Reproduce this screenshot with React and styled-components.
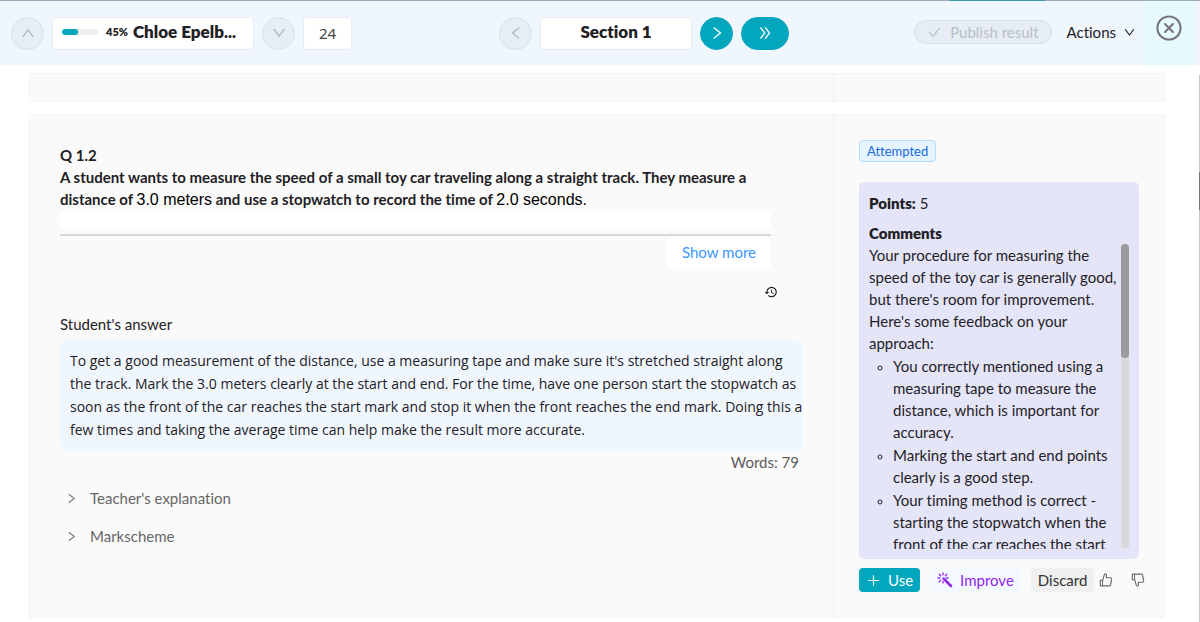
import React from 'react'
import styled, { createGlobalStyle } from 'styled-components'
import {
  AiOutlineUp,
  AiOutlineDown,
  AiOutlineLeft,
  AiOutlineRight,
  AiOutlineDoubleRight,
  AiOutlineCheck,
  AiOutlinePlus,
  AiOutlineLike,
  AiOutlineDislike
} from 'react-icons/ai'
import { MdHistory } from 'react-icons/md'

const GlobalStyle = createGlobalStyle`
  * {
    box-sizing: border-box;
  }

  body {
    margin: 0;
    background: #fff;
    color: #1f2124;
    font-family: Lato, "Open Sans", sans-serif;
    font-size: 15px;
    font-variant-ligatures: none;
    line-height: 22px;
  }

  button, input {
    font: inherit;
    color: inherit;
  }

  p, h2, h3, ul {
    margin: 0;
    padding: 0;
    font-size: inherit;
  }
`

const Page = styled.div`
  height: 100vh;
  overflow: hidden;
  display: flex;
  flex-direction: column;
`

const TopBar = styled.header`
  display: grid;
  grid-template-columns: 17fr auto 14fr;
  align-items: center;
  height: 65px;
  flex: none;
  border-top: 1px solid;
  border-image: linear-gradient(to right, #a4a9b6 79%, #4595ab 79%, #4595ab 87%, #a4a9b6 87%) 1;
  background: #eff6fe;
`

const Group = styled.div`
  display: flex;
  align-items: center;
  gap: 8px;
`

const StartGroup = styled(Group)`
  padding-left: 11px;
`

const EndGroup = styled(Group)`
  justify-content: flex-end;
  align-self: stretch;
  gap: 0;
`

const RoundButton = styled.button`
  display: flex;
  align-items: center;
  justify-content: center;
  width: ${props => props.$wide ? '48px' : '33px'};
  height: 33px;
  padding: 0;
  border-radius: 17px;
  border: 1px solid ${props => props.$primary ? '#02a7be' : '#dbe1e8'};
  background: ${props => props.$primary ? '#02a7be' : '#e6edf5'};
  color: ${props => props.$primary ? '#fff' : '#b0b6bd'};
  font-size: 16px;
`

const Picker = styled.button`
  display: flex;
  align-items: center;
  justify-content: ${props => props.$center ? 'center' : 'flex-start'};
  width: ${props => props.$center ? '152px' : '202px'};
  height: 33px;
  padding: 0 9px 2px;
  border: 1px solid #e9edf1;
  border-radius: 5px;
  background: #fff;
  font-size: 17px;
  font-weight: 800;
  white-space: nowrap;
`

const Track = styled.span`
  width: 36px;
  height: 6px;
  margin-right: 8px;
  border-radius: 3px;
  background: #efefef;
`

const Fill = styled.span`
  display: block;
  height: 6px;
  border-radius: 3px;
  background: #02a7be;
`

const Percent = styled.span`
  margin-right: 5px;
  font-size: 11px;
`

const CountInput = styled.input`
  width: 49px;
  height: 33px;
  padding: 0;
  border: 1px solid #e9edf1;
  border-radius: 4px;
  background: #fff;
  font-family: "Noto Sans", sans-serif;
  font-size: 15px;
  text-align: center;
  color: #444;
`

const PublishButton = styled.button`
  display: flex;
  align-items: center;
  gap: 8px;
  height: 24px;
  margin-bottom: 2px;
  padding: 0 12px;
  border: 1px solid #dbe1e8;
  border-radius: 12px;
  background: #e6edf5;
  color: #b9bfc6;
`

const ActionsButton = styled.button`
  display: flex;
  align-items: center;
  gap: 7px;
  margin: 0 8px 2px 15px;
  padding: 0;
  border: 0;
  background: none;

  svg {
    font-size: 13px;
  }
`

const CloseButton = styled.button`
  display: flex;
  align-items: center;
  justify-content: center;
  align-self: stretch;
  width: 50px;
  margin-right: 6px;
  padding: 0 0 11px;
  border: 0;
  background: #e6fafe;
`

const Body = styled.div`
  flex: 1;
  min-height: 0;
  display: flex;
`

const Content = styled.main`
  flex: 1;
  min-width: 0;
  display: flex;
  flex-direction: column;
  gap: 12px;
  padding: 8px 34px 4px 29px;
`

const PageScrollbar = styled.div`
  width: 1px;
  margin-top: 10px;
  padding-top: 97px;
  background: #c9c9c9;
`

const PageThumb = styled.div`
  height: 38px;
  background: #777;
`

const Row = styled.section`
  display: grid;
  grid-template-columns: minmax(0, 1fr) 330px;
  flex: ${props => props.$fill ? '1' : '0 0 29px'};
  min-height: 0;
  border: 1px solid #f4f4f5;
  background: #fafafa;
`

const Question = styled.div`
  padding: 29px 30px 0;
  border-right: 1px solid #f1f1f2;
`

const Stem = styled.div`
  margin-right: 32px;
  font-weight: 700;
  border-bottom: 2px solid #d9d9d9;

  &::after {
    content: '';
    display: block;
    height: 16px;
    margin: 1px 0 6px;
    background: #fff;
  }
`

const Measure = styled.span`
  font-family: "Liberation Sans", Arial, sans-serif;
  font-size: 16px;
  font-weight: 400;
  color: #000;
`

const ShowMore = styled.button`
  display: block;
  height: 32px;
  margin: 1px 32px 0 auto;
  padding: 0 15px 2px;
  border: 0;
  border-radius: 4px;
  background: #fff;
  color: #3a97ff;
`

const HistoryButton = styled.button`
  display: block;
  height: 14px;
  margin: 16px 25px 0 auto;
  padding: 0;
  border: 0;
  background: none;
  font-size: 14px;
  line-height: 14px;
`

const Label = styled.h3`
  margin-top: 14px;
  font-weight: 400;
`

const Answer = styled.p`
  margin-top: 5px;
  padding: 9px 0 10px 10px;
  border-radius: 8px;
  background: #eff6fe;
  font-family: "Open Sans", sans-serif;
  font-size: 14px;
  line-height: 23px;
  white-space: nowrap;
`

const WordCount = styled.p`
  padding: 0 4px;
  text-align: right;
  color: #5d5d5d;
`

const Folds = styled.div`
  display: flex;
  flex-direction: column;
  align-items: flex-start;
  gap: 16px;
  margin-top: 14px;
`

const Fold = styled.button`
  display: flex;
  align-items: center;
  gap: 12px;
  padding: 0 5px;
  border: 0;
  background: none;
  color: #666;

  svg {
    font-size: 13px;
  }
`

const Review = styled.aside`
  display: flex;
  flex-direction: column;
  align-items: flex-start;
  padding: 25px;
`

const Tag = styled.span`
  height: 22px;
  padding: 0 7px;
  border: 1px solid #b5dcff;
  border-radius: 4px;
  background: #e6f4ff;
  color: #1769e0;
  font-size: 13px;
  line-height: 20px;
`

const Feedback = styled.div`
  align-self: stretch;
  margin-top: 20px;
  padding: 10px;
  border-radius: 5px;
  background: #e5e5fa;

  b {
    font-weight: 800;
  }
`

const CommentsTitle = styled.h3`
  margin-top: 8px;
  font-weight: 800;
`

const CommentsBox = styled.div`
  display: flex;
  justify-content: space-between;
  height: 305px;
  overflow: hidden;
`

const Comments = styled.div`
  white-space: nowrap;

  ul {
    margin-top: 1px;
    padding-left: 24px;
    list-style: circle;
  }

  li {
    margin-bottom: 1px;
  }

  li::marker {
    font-size: 12px;
  }
`

const ScrollTrack = styled.div`
  width: 8px;
  border-radius: 4px;
  background: #d9d9dc;
`

const ScrollThumb = styled.div`
  height: 114px;
  border-radius: 4px;
  background: #9b9b9b;
`

const Buttons = styled.div`
  display: flex;
  align-items: center;
  gap: 10px;
  margin-top: 9px;
`

const SmallButton = styled.button`
  display: flex;
  align-items: center;
  gap: 7px;
  height: 24px;
  padding: 0 7px;
  border: 0;
  border-radius: 4px;
  background: ${props => props.$bg};
  color: ${props => props.$color};
`

const Votes = styled.div`
  display: flex;
  gap: 16px;
  margin-left: -6px;
`

const IconButton = styled.button`
  display: flex;
  padding: 0;
  border: 0;
  background: none;
  color: #6b6b6b;
  font-size: 16px;
`

const CloseIcon = () => (
  <svg width="26" height="26" viewBox="0 0 26 26" fill="none" stroke="#75727a" strokeWidth="2">
    <circle cx="13" cy="13" r="11.6"/>
    <path d="M9 9l8 8M17 9l-8 8" strokeLinecap="round"/>
  </svg>
)

const WandIcon = () => (
  <svg width="16" height="16" viewBox="0 0 16 16" fill="none" stroke="#9024ee" strokeWidth="1.3" strokeLinecap="round">
    <path d="M6.6 6.6l7.4 7.4" strokeWidth="2.6"/>
    <path d="M6 1v1.8M1 6h1.8M2.2 2.2l1.5 1.5M9.8 2.2L8.3 3.7M2.2 9.8l1.5-1.5M6 9.3V11M9.3 6H11"/>
  </svg>
)

const TopNav = () => (
  <TopBar>
    <StartGroup>
      <RoundButton disabled aria-label="Previous student"><AiOutlineUp/></RoundButton>
      <Picker>
        <Track><Fill style={{ width: '45%' }}/></Track>
        <Percent>45%</Percent>
        Chloe Epelb...
      </Picker>
      <RoundButton disabled aria-label="Next student"><AiOutlineDown/></RoundButton>
      <CountInput aria-label="Total points" defaultValue="24"/>
    </StartGroup>
    <Group>
      <RoundButton disabled aria-label="Previous section"><AiOutlineLeft/></RoundButton>
      <Picker $center>Section 1</Picker>
      <RoundButton $primary aria-label="Next section"><AiOutlineRight/></RoundButton>
      <RoundButton $primary $wide aria-label="Last section"><AiOutlineDoubleRight/></RoundButton>
    </Group>
    <EndGroup>
      <PublishButton disabled><AiOutlineCheck/>Publish result</PublishButton>
      <ActionsButton>Actions<AiOutlineDown/></ActionsButton>
      <CloseButton aria-label="Close"><CloseIcon/></CloseButton>
    </EndGroup>
  </TopBar>
)

const FeedbackCard = () => (
  <Feedback>
    <p><b>Points:</b> 5</p>
    <CommentsTitle>Comments</CommentsTitle>
    <CommentsBox>
      <Comments>
        <p>
          Your procedure for measuring the<br/>
          speed of the toy car is generally good,<br/>
          but there's room for improvement.<br/>
          Here's some feedback on your<br/>
          approach:
        </p>
        <ul>
          <li>You correctly mentioned using a<br/>measuring tape to measure the<br/>distance, which is important for<br/>accuracy.</li>
          <li>Marking the start and end points<br/>clearly is a good step.</li>
          <li>Your timing method is correct -<br/>starting the stopwatch when the<br/>front of the car reaches the start</li>
        </ul>
      </Comments>
      <ScrollTrack><ScrollThumb/></ScrollTrack>
    </CommentsBox>
  </Feedback>
)

const App = () => (
  <Page>
    <GlobalStyle/>
    <TopNav/>
    <Body>
      <Content>
        <Row><Question/></Row>
        <Row $fill>
          <Question>
            <Stem>
              <h2>Q 1.2</h2>
              <p>
                A student wants to measure the speed of a small toy car traveling along a straight track. They measure a<br/>
                distance of <Measure>3.0 meters</Measure> and use a stopwatch to record the time of <Measure>2.0 seconds.</Measure>
              </p>
            </Stem>
            <ShowMore>Show more</ShowMore>
            <HistoryButton aria-label="History"><MdHistory/></HistoryButton>
            <Label>Student's answer</Label>
            <Answer>
              To get a good measurement of the distance, use a measuring tape and make sure it's stretched straight along<br/>
              the track. Mark the 3.0 meters clearly at the start and end. For the time, have one person start the stopwatch as<br/>
              soon as the front of the car reaches the start mark and stop it when the front reaches the end mark. Doing this a<br/>
              few times and taking the average time can help make the result more accurate.
            </Answer>
            <WordCount>Words: 79</WordCount>
            <Folds>
              <Fold><AiOutlineRight/>Teacher's explanation</Fold>
              <Fold><AiOutlineRight/>Markscheme</Fold>
            </Folds>
          </Question>
          <Review>
            <Tag>Attempted</Tag>
            <FeedbackCard/>
            <Buttons>
              <SmallButton $bg="#02a7be" $color="#fff"><AiOutlinePlus/>Use</SmallButton>
              <SmallButton $bg="#f3f9fe" $color="#9024ee"><WandIcon/>Improve</SmallButton>
              <SmallButton $bg="#f0f0f0" $color="#333">Discard</SmallButton>
              <Votes>
                <IconButton aria-label="Like"><AiOutlineLike/></IconButton>
                <IconButton aria-label="Dislike"><AiOutlineDislike/></IconButton>
              </Votes>
            </Buttons>
          </Review>
        </Row>
      </Content>
      <PageScrollbar><PageThumb/></PageScrollbar>
    </Body>
  </Page>
)

export default App
